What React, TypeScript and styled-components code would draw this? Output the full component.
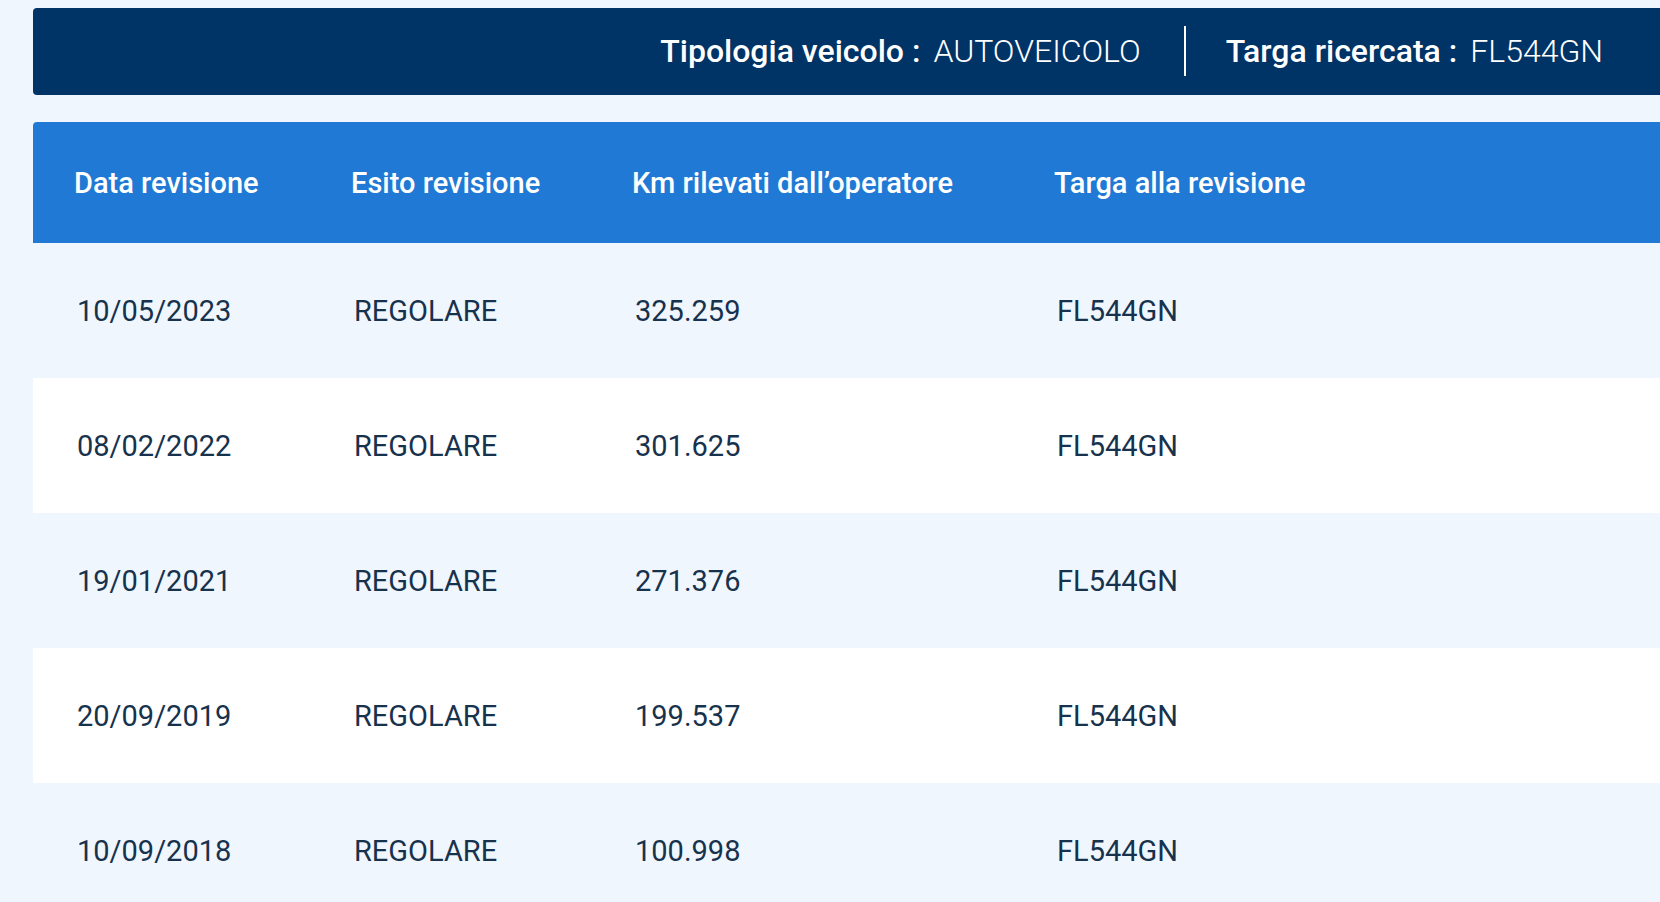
import React from "react";
import styled, { createGlobalStyle } from "styled-components";

const GlobalStyle = createGlobalStyle`
  html, body {
    margin: 0;
    padding: 0;
    background: #f0f6fe;
    font-family: Roboto, "Noto Sans", "Liberation Sans", sans-serif;
    overflow: hidden;
  }
`;

const Page = styled.div`
  padding: 8px 0 0 33px;
  display: flex;
  flex-direction: column;
  gap: 27px;
`;

const SearchBar = styled.div`
  height: 87px;
  background: #003366;
  border-radius: 4px 0 0 4px;
  display: flex;
  align-items: center;
  justify-content: flex-end;
  padding: 0 57px 2px 0;
  box-sizing: border-box;
  color: #fff;
`;

const InfoItem = styled.div`
  display: flex;
  align-items: baseline;
  gap: 13px;
  font-size: 32px;
`;

const InfoLabel = styled.span`
  font-weight: 500;
`;

const InfoValue = styled.span`
  font-weight: 300;
`;

const Divider = styled.div`
  width: 2px;
  height: 50px;
  background: #fff;
  margin: 0 40px 0 43px;
`;

const Table = styled.div`
  display: flex;
  flex-direction: column;
`;

const Row = styled.div<{ $head?: boolean; $striped?: boolean }>`
  display: grid;
  grid-template-columns: 277px 281px 422px 1fr;
  align-items: center;
  height: ${(p) => (p.$head ? "121px" : "135px")};
  background: ${(p) => (p.$head ? "#2079d4" : p.$striped ? "#ffffff" : "transparent")};
  border-radius: ${(p) => (p.$head ? "4px 0 0 0" : "0")};
  color: ${(p) => (p.$head ? "#ffffff" : "#17324d")};
  font-size: 29px;
  font-weight: ${(p) => (p.$head ? 500 : 400)};
`;

const Cell = styled.div`
  padding-left: 41px;
  white-space: nowrap;
`;

const DataCell = styled(Cell)`
  padding-left: 44px;
`;

const columns = ["Data revisione", "Esito revisione", "Km rilevati dall\u2019operatore", "Targa alla revisione"];

const revisions = [
  { date: "10/05/2023", esito: "REGOLARE", km: "325.259", targa: "FL544GN" },
  { date: "08/02/2022", esito: "REGOLARE", km: "301.625", targa: "FL544GN" },
  { date: "19/01/2021", esito: "REGOLARE", km: "271.376", targa: "FL544GN" },
  { date: "20/09/2019", esito: "REGOLARE", km: "199.537", targa: "FL544GN" },
  { date: "10/09/2018", esito: "REGOLARE", km: "100.998", targa: "FL544GN" },
];

const App: React.FC = () => {
  return (
    <>
      <GlobalStyle />
      <Page>
        <SearchBar>
          <InfoItem>
            <InfoLabel>Tipologia veicolo :</InfoLabel>
            <InfoValue>AUTOVEICOLO</InfoValue>
          </InfoItem>
          <Divider />
          <InfoItem>
            <InfoLabel>Targa ricercata :</InfoLabel>
            <InfoValue>FL544GN</InfoValue>
          </InfoItem>
        </SearchBar>

        <Table>
          <Row $head>
            {columns.map((c) => (
              <Cell key={c}>{c}</Cell>
            ))}
          </Row>
          {revisions.map((r, i) => (
            <Row key={r.date} $striped={i % 2 === 1}>
              <DataCell>{r.date}</DataCell>
              <DataCell>{r.esito}</DataCell>
              <DataCell>{r.km}</DataCell>
              <DataCell>{r.targa}</DataCell>
            </Row>
          ))}
        </Table>
      </Page>
    </>
  );
};

export default App;
